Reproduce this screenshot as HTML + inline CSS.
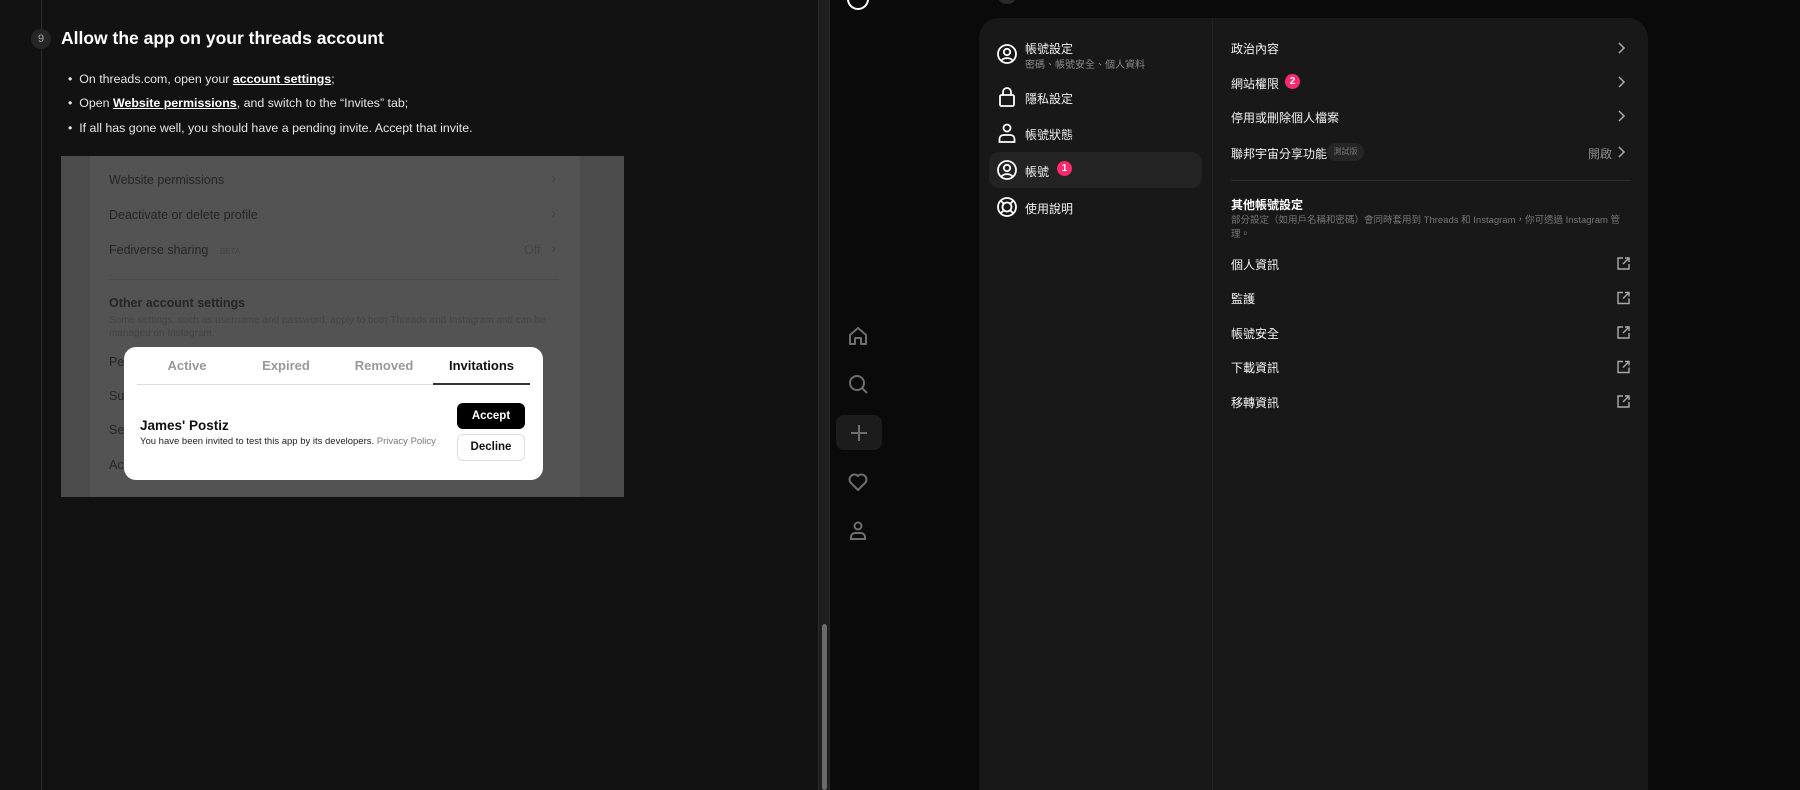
<!DOCTYPE html>
<html><head><meta charset="utf-8"><style>
*{margin:0;padding:0;box-sizing:border-box}
html,body{width:1800px;height:790px;overflow:hidden}
body{background:#0a0a0a;font-family:"Liberation Sans","Noto Sans CJK TC",sans-serif;position:relative}
.a{position:absolute;white-space:nowrap}
#left{position:absolute;left:0;top:0;width:818px;height:790px;background:#121212}
.b{color:#e6e6e6;font-size:12.4px}
.b u{font-weight:bold;color:#fff}
.g{color:#262626;font-size:12.5px}
.r{color:#f2f2f2;font-size:12px}
.s{color:#8a8a8a;font-size:10px}
svg{position:absolute;overflow:visible}
</style></head><body>
<div id="left">
<div class="a" style="left:41px;top:0;width:1px;height:790px;background:#2c2c2c"></div>
<div class="a" style="left:31px;top:29px;width:20px;height:20px;border-radius:50%;background:#262626;color:#aaa;font-size:11px;text-align:center;line-height:20px">9</div>
<div class="a" style="left:61px;top:28px;color:#fff;font-size:17.5px;font-weight:bold">Allow the app on your threads account</div>
<div class="a b" style="left:68px;top:72px">•&nbsp;&nbsp;On threads.com, open your <u>account settings</u>;</div>
<div class="a b" style="left:68px;top:96px">•&nbsp;&nbsp;Open <u>Website permissions</u>, and switch to the “Invites” tab;</div>
<div class="a b" style="left:68px;top:121px">•&nbsp;&nbsp;If all has gone well, you should have a pending invite. Accept that invite.</div>
<div class="a" style="left:61px;top:156px;width:563px;height:341px;background:#4b4b4b;overflow:hidden">
 <div class="a" style="left:29px;top:0;width:490px;height:341px;background:#535353"></div>
 <div class="a g" style="left:48px;top:17px">Website permissions</div>
 <div class="a g" style="left:48px;top:52px">Deactivate or delete profile</div>
 <div class="a g" style="left:48px;top:87px">Fediverse sharing <span style="font-size:8px;color:#444;margin-left:8px">BETA</span></div>
 <div class="a g" style="left:463px;top:87px;color:#444">Off</div>
 <div class="a g" style="left:490px;top:14px;color:#444;font-size:15px">›</div>
 <div class="a g" style="left:490px;top:49px;color:#444;font-size:15px">›</div>
 <div class="a g" style="left:490px;top:84px;color:#444;font-size:15px">›</div>
 <div class="a" style="left:48px;top:123px;width:450px;height:1px;background:#4a4a4a"></div>
 <div class="a g" style="left:48px;top:140px;font-weight:bold">Other account settings</div>
 <div class="a" style="left:48px;top:158px;color:#444;font-size:10px;line-height:13px">Some settings, such as username and password, apply to both Threads and Instagram and can be<br>managed on Instagram.</div>
 <div class="a g" style="left:48px;top:199px">Pe</div><div class="a g" style="left:48px;top:233px">Su</div><div class="a g" style="left:48px;top:267px">Se</div><div class="a g" style="left:48px;top:302px">Ac</div>
 <div class="a" style="left:63px;top:191px;width:419px;height:133px;background:#fff;border-radius:12px">
  <div class="a" style="left:13px;top:11px;width:100px;text-align:center;color:#999;font-size:13px;font-weight:bold">Active</div>
  <div class="a" style="left:112px;top:11px;width:100px;text-align:center;color:#999;font-size:13px;font-weight:bold">Expired</div>
  <div class="a" style="left:210px;top:11px;width:100px;text-align:center;color:#999;font-size:13px;font-weight:bold">Removed</div>
  <div class="a" style="left:309px;top:11px;width:97px;text-align:center;color:#111;font-size:13px;font-weight:bold">Invitations</div>
  <div class="a" style="left:13px;top:37px;width:393px;height:1px;background:#ddd"></div>
  <div class="a" style="left:309px;top:36px;width:97px;height:2px;background:#333"></div>
  <div class="a" style="left:16px;top:71px;color:#111;font-size:13.5px;font-weight:bold">James' Postiz</div>
  <div class="a" style="left:16px;top:89px;color:#222;font-size:9.5px">You have been invited to test this app by its developers. <span style="color:#777">Privacy Policy</span></div>
  <div class="a" style="left:333px;top:56px;width:68px;height:26px;background:#000;border-radius:6px;color:#fff;font-size:11.5px;font-weight:bold;text-align:center;line-height:26px">Accept</div>
  <div class="a" style="left:333px;top:87px;width:68px;height:27px;background:#fff;border:1px solid #ddd;border-radius:6px;color:#111;font-size:11.5px;font-weight:bold;text-align:center;line-height:25px">Decline</div>
 </div>
</div>
</div>
<div class="a" style="left:818px;top:0;width:12px;height:790px;background:#1d1d1d;border-left:1px solid #2a2a2a;border-right:1px solid #2a2a2a"></div>
<div class="a" style="left:822px;top:624px;width:5px;height:166px;background:#6a6a6a;border-radius:3px"></div>

<div class="a" style="left:847px;top:-12px;width:22px;height:22px;border:2.5px solid #fff;border-radius:50%"></div>
<div class="a" style="left:998px;top:-10px;width:18px;height:14px;border-radius:50%;background:#2a2a2a"></div>
<svg style="left:848px;top:326px" width="20" height="20" fill="none" stroke="#6e6e6e" stroke-width="2"><path d="M2 9 L10 2 L18 9 V18 H13 V12 H7 V18 H2 Z" stroke-linejoin="round"/></svg>
<svg style="left:848px;top:374px" width="20" height="20" fill="none" stroke="#6e6e6e" stroke-width="2"><circle cx="9" cy="9" r="7"/><path d="M14 14 L19 19"/></svg>
<div class="a" style="left:836px;top:415px;width:46px;height:35px;background:#1c1c1c;border-radius:8px"></div>
<svg style="left:849px;top:423px" width="20" height="20" stroke="#6e6e6e" stroke-width="2"><path d="M10 2 V18 M2 10 H18"/></svg>
<svg style="left:848px;top:472px" width="20" height="20" fill="none" stroke="#6e6e6e" stroke-width="2"><path d="M10 18 L3 11 A4.5 4.5 0 0 1 10 4 A4.5 4.5 0 0 1 17 11 Z" stroke-linejoin="round"/></svg>
<svg style="left:848px;top:521px" width="20" height="20" fill="none" stroke="#6e6e6e" stroke-width="2"><circle cx="10" cy="5" r="3.5"/><path d="M3 18 V16 A4 4 0 0 1 7 12 H13 A4 4 0 0 1 17 16 V18 Z"/></svg>

<div class="a" style="left:979px;top:18px;width:669px;height:792px;background:#181818;border-radius:20px"></div>
<div class="a" style="left:1212px;top:18px;width:1px;height:772px;background:#222"></div>
<div class="a" style="left:989px;top:152px;width:213px;height:36px;background:#232323;border-radius:10px"></div>

<svg style="left:997px;top:44px" width="20" height="20" fill="none" stroke="#fff" stroke-width="1.8"><circle cx="10" cy="10" r="9"/><circle cx="10" cy="8" r="3.2"/><path d="M4.5 16.5 A6 4 0 0 1 15.5 16.5"/></svg>
<div class="a r" style="left:1025px;top:40px">帳號設定</div>
<div class="a s" style="left:1025px;top:56px">密碼、帳號安全、個人資料</div>
<svg style="left:999px;top:87px" width="16" height="20" fill="none" stroke="#fff" stroke-width="1.8"><rect x="1" y="8" width="14" height="11" rx="1.5"/><path d="M4 8 V5 A4 4 0 0 1 12 5 V8"/></svg>
<div class="a r" style="left:1025px;top:90px">隱私設定</div>
<svg style="left:998px;top:123px" width="18" height="20" fill="none" stroke="#fff" stroke-width="1.8"><circle cx="9" cy="5" r="3.5"/><path d="M1.5 19 V16 A4 4 0 0 1 5.5 12 H12.5 A4 4 0 0 1 16.5 16 V19 Z"/></svg>
<div class="a r" style="left:1025px;top:126px">帳號狀態</div>
<svg style="left:997px;top:160px" width="20" height="20" fill="none" stroke="#fff" stroke-width="1.8"><circle cx="10" cy="10" r="9"/><circle cx="10" cy="8" r="3.2"/><path d="M4.5 16.5 A6 4 0 0 1 15.5 16.5"/></svg>
<div class="a r" style="left:1025px;top:163px">帳號</div>
<div class="a" style="left:1057px;top:161px;width:15px;height:15px;border-radius:50%;background:#ff2a6d;color:#fff;font-size:10px;font-weight:bold;text-align:center;line-height:15px">1</div>
<svg style="left:997px;top:197px" width="20" height="20" fill="none" stroke="#fff" stroke-width="1.8"><circle cx="10" cy="10" r="9"/><circle cx="10" cy="10" r="4.5"/><path d="M3.6 3.6 L6.8 6.8 M16.4 3.6 L13.2 6.8 M3.6 16.4 L6.8 13.2 M16.4 16.4 L13.2 13.2"/></svg>
<div class="a r" style="left:1025px;top:200px">使用說明</div>

<div class="a r" style="left:1231px;top:40px">政治內容</div>
<div class="a r" style="left:1231px;top:75px">網站權限</div>
<div class="a" style="left:1285px;top:74px;width:15px;height:15px;border-radius:50%;background:#ff2a6d;color:#fff;font-size:10px;font-weight:bold;text-align:center;line-height:15px">2</div>
<div class="a r" style="left:1231px;top:109px">停用或刪除個人檔案</div>
<div class="a r" style="left:1231px;top:145px">聯邦宇宙分享功能</div>
<div class="a" style="left:1327px;top:143px;width:37px;height:18px;border-radius:9px;background:#252525;color:#777;font-size:8px;text-align:center;line-height:18px">測試版</div>
<div class="a" style="left:1588px;top:145px;color:#888;font-size:12px">開啟</div>
<svg style="left:1618px;top:43px" width="8" height="120" fill="none" stroke="#aaa" stroke-width="1.5"><path d="M1 0 L6 5 L1 10 M1 34 L6 39 L1 44 M1 68 L6 73 L1 78 M1 104 L6 109 L1 114"/></svg>
<div class="a" style="left:1231px;top:180px;width:400px;height:1px;background:#2c2c2c"></div>
<div class="a" style="left:1231px;top:196px;color:#fff;font-size:12px;font-weight:bold">其他帳號設定</div>
<div class="a" style="left:1231px;top:214px;color:#777;font-size:9.5px;line-height:14px">部分設定（如用戶名稱和密碼）會同時套用到 Threads 和 Instagram，你可透過 Instagram 管<br>理。</div>
<div class="a r" style="left:1231px;top:256px">個人資訊</div>
<div class="a r" style="left:1231px;top:290px">監護</div>
<div class="a r" style="left:1231px;top:325px">帳號安全</div>
<div class="a r" style="left:1231px;top:359px">下載資訊</div>
<div class="a r" style="left:1231px;top:394px">移轉資訊</div>
<svg style="left:1617px;top:257px" width="13" height="150" fill="none" stroke="#aaa" stroke-width="1.4"><g id="e"><path d="M6 1 H1 V12 H12 V7 M8 1 H12 V5 M12 1 L6 7"/></g><use href="#e" y="34.5"/><use href="#e" y="69"/><use href="#e" y="103.5"/><use href="#e" y="138"/></svg>
</body></html>
